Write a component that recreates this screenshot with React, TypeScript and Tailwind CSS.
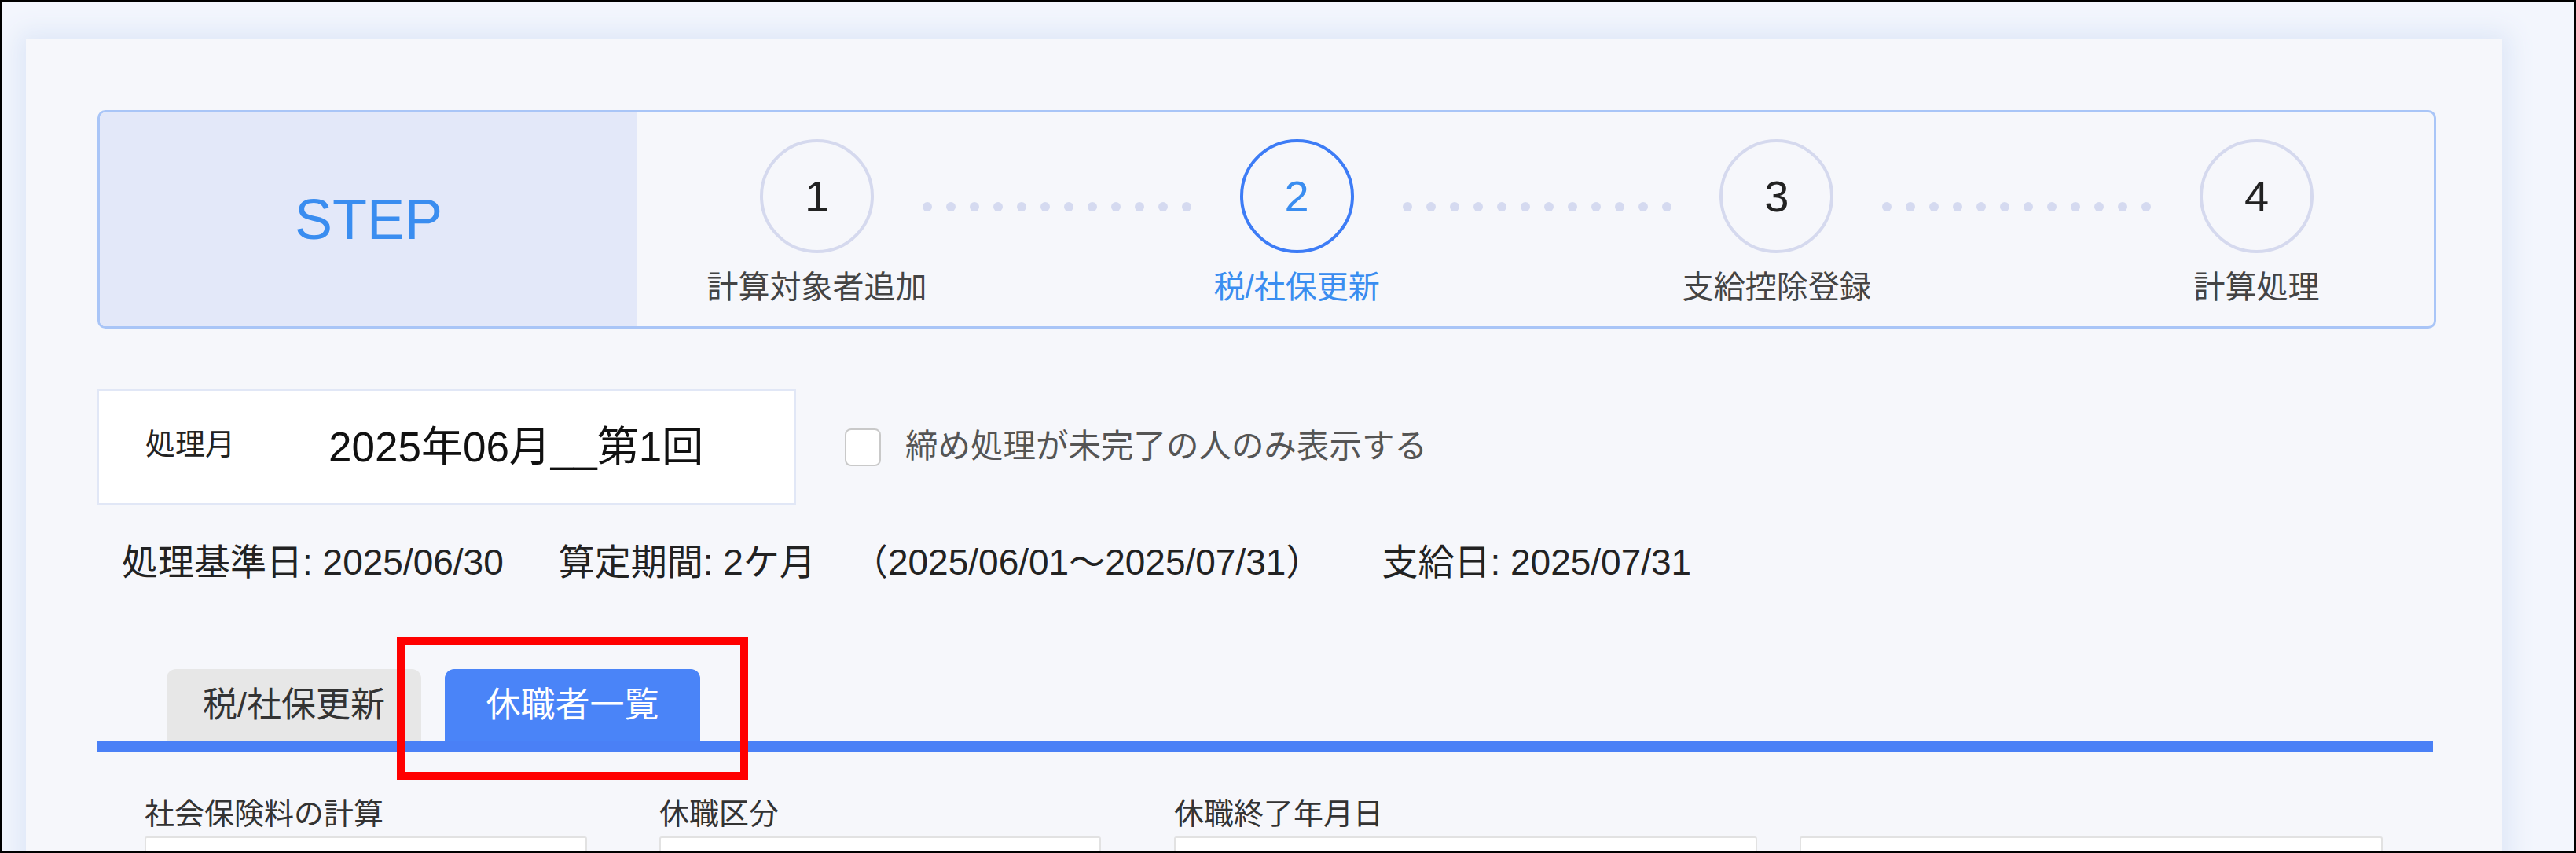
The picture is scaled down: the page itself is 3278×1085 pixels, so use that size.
import React from "react";

const font = "font-['Liberation_Sans','Noto_Sans_CJK_JP',sans-serif]";

const steps = [
    { no: "1", label: "計算対象者追加", active: false },
    { no: "2", label: "税/社保更新", active: true },
    { no: "3", label: "支給控除登録", active: false },
    { no: "4", label: "計算処理", active: false },
];

function Dots() {
    return <div className="flex-1 flex justify-center gap-[18px] mt-[80px]">
        {Array.from({ length: 12 }).map((_, i) => (
            <div key={i} className="w-[12px] h-[12px] rounded-full bg-[#d5daf0]" />
        ))}
    </div>
}

function StepItem({ no, label, active }: { no: string; label: string; active: boolean }) {
    return <div className="w-[145px] flex flex-col items-center">
        <div className={`w-[145px] h-[145px] rounded-full border-[4px] flex items-center justify-center text-[56px] leading-none ${active ? "border-[#3d7cf6] text-[#3a8df0]" : "border-[#d5d9ee] text-[#222]"}`}>
            {no}
        </div>
        <div className={`mt-[23px] text-[40px] leading-none whitespace-nowrap ${active ? "text-[#3a8df0]" : "text-[#444]"}`}>
            {label}
        </div>
    </div>
}

function Field({ label, className }: { label: string; className: string }) {
    return <div className={className}>
        <div className="text-[38px] leading-[46px] text-[#333] h-[46px]">{label}</div>
        <div className="mt-[6px] h-[60px] bg-white border-2 border-[#e2e2e2] rounded-[3px]" />
    </div>
}

export default function App() {
    return <div className={`${font} relative w-[3278px] h-[1085px] overflow-hidden border-[3px] border-black bg-[#f3f6fd] pl-[30px] pt-[47px] pr-[91px]`}>
        <div className="h-[1200px] bg-[#f6f7fb] shadow-[0_0_30px_10px_rgba(222,231,247,1)] pl-[91px] pr-[84px] pt-[90px]">
            {/* step header */}
            <div className="h-[278px] rounded-[10px] border-[3px] border-[#a9c5f7] flex overflow-hidden">
                <div className="w-[684px] bg-[#e3e8f9] flex items-center justify-center text-[72px] text-[#3a8df0]">
                    STEP
                </div>
                <div className="flex-1 flex items-start pl-[156px] pr-[153px] pt-[34px]">
                    {steps.map((s, i) => (
                        <React.Fragment key={s.no}>
                            {i > 0 && <Dots />}
                            <StepItem {...s} />
                        </React.Fragment>
                    ))}
                </div>
            </div>

            {/* processing month */}
            <div className="mt-[77px] flex items-center">
                <div className="w-[889px] h-[147px] bg-white border-2 border-[#e1e7f6] flex items-center">
                    <div className="w-[292px] pl-[59px] text-[38px] text-[#222] -mt-[6px]">処理月</div>
                    <div className="text-[53px] text-[#111]">2025年06月__第1回</div>
                </div>
                <div className="ml-[62px] w-[46px] h-[48px] rounded-[8px] border-2 border-[#c9c9c9] bg-white" />
                <div className="ml-[31px] text-[41.5px] text-[#555]">締め処理が未完了の人のみ表示する</div>
            </div>

            {/* dates */}
            <div className="mt-[46px] pl-[31px] flex items-center text-[46px] leading-[55px] text-[#222] whitespace-nowrap">
                <span>処理基準日: 2025/06/30</span>
                <span className="ml-[70px]">算定期間: 2ケ月</span>
                <span className="ml-[46px]">（2025/06/01～2025/07/31）</span>
                <span className="ml-[76px]">支給日: 2025/07/31</span>
            </div>

            {/* tabs */}
            <div className="mt-[108px] pl-[88px] flex items-end">
                <div className="w-[324px] h-[92px] rounded-t-[12px] bg-[#e7e7e7] flex items-center justify-center text-[44px] text-[#333]">
                    税/社保更新
                </div>
                <div className="ml-[30px] w-[325px] h-[92px] rounded-t-[12px] bg-[#4a84f8] flex items-center justify-center text-[44px] text-white">
                    休職者一覧
                </div>
            </div>
            <div className="h-[14px] bg-[#4a80f6] mr-[4px]" />

            {/* fields */}
            <div className="mt-[55px] pl-[60px] flex">
                <Field label="社会保険料の計算" className="w-[563px]" />
                <Field label="休職区分" className="ml-[92px] w-[562px]" />
                <Field label="休職終了年月日" className="ml-[93px] w-[742px]" />
                <Field label="" className="ml-[54px] w-[742px]" />
            </div>
        </div>

        {/* annotation */}
        <div className="absolute left-[502px] top-[807px] w-[447px] h-[182px] border-[10px] border-[#ff0000]" />
    </div>
}
